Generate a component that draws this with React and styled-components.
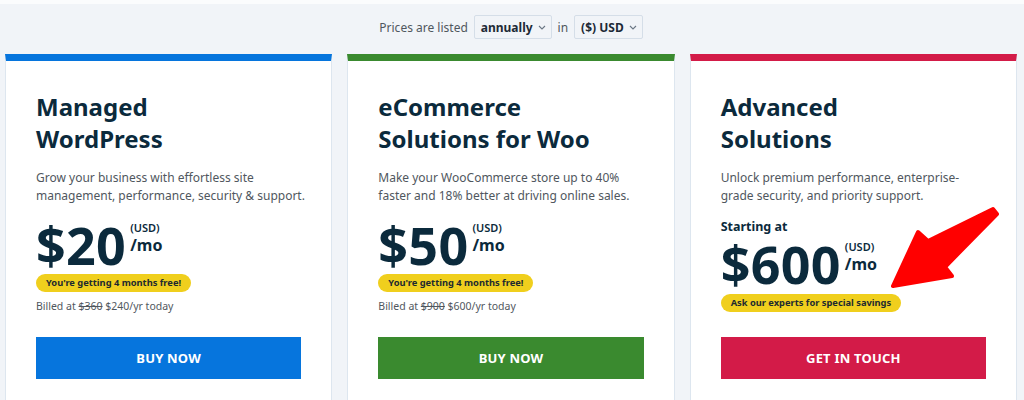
import React from 'react';
import styled, { createGlobalStyle } from 'styled-components';

const GlobalStyle = createGlobalStyle`
  body {
    margin: 0;
    background: #f1f4f8;
    font-family: "Noto Sans", "Open Sans", "Liberation Sans", sans-serif;
  }
`;

const Page = styled.div`
  position: relative;
  border-top: 4px solid #fbfcfd;
  padding: 0 7px 0 5px;
  overflow: hidden;
  height: 396px;
`;

const Toolbar = styled.div`
  display: flex;
  align-items: center;
  justify-content: center;
  gap: 6px;
  height: 46px;
  padding-bottom: 4px;
  font-size: 12px;
  color: #50575e;
`;

const Select = styled.div`
  display: flex;
  align-items: center;
  gap: 5px;
  height: 24px;
  box-sizing: border-box;
  padding: 0 5px 0 6px;
  border: 1px solid #d5dee8;
  border-radius: 2px;
  font-weight: 700;
  color: #1d2a36;
`;

const Grid = styled.div`
  display: grid;
  grid-template-columns: repeat(3, 1fr);
  gap: 15px;
  align-items: stretch;
`;

const Card = styled.div`
  display: flex;
  flex-direction: column;
  background: #fff;
  border: 1px solid #dde6ef;
  border-top: 7px solid ${p => p.$accent};
  padding: 30px 30px 30px 30px;
`;

const Body = styled.div`
  flex: 1;
  display: flex;
  flex-direction: column;
  padding-bottom: 22px;
`;

const Title = styled.h2`
  margin: 0;
  max-width: 220px;
  font-size: 24px;
  line-height: 32px;
  font-weight: 700;
  color: #0b2a3c;
`;

const Desc = styled.p`
  margin: 14px ${p => -(p.$bleed || 0)}px 0 0;
  font-size: 12px;
  line-height: 18px;
  color: #50575e;
`;

const Starting = styled.div`
  margin-top: 13px;
  font-size: 12.5px;
  line-height: 18px;
  font-weight: 700;
  color: #0b2a3c;
`;

const PriceRow = styled.div`
  display: flex;
  align-items: flex-start;
  margin-top: ${p => (p.$tight ? '2px' : '14px')};
  color: #0b2a3c;
`;

const Amount = styled.span`
  font-size: 52px;
  line-height: 52px;
  font-weight: 700;
  letter-spacing: 0.3px;
`;

const Unit = styled.div`
  display: flex;
  flex-direction: column;
  margin: 2px 0 0 4px;
`;

const Currency = styled.span`
  font-size: 11px;
  font-weight: 600;
  line-height: 14px;
`;

const Per = styled.span`
  font-size: 16px;
  font-weight: 700;
  line-height: 20px;
`;

const Badge = styled.span`
  align-self: flex-start;
  margin-top: ${p => (p.$tight ? '4px' : '3px')};
  padding: 0 10px;
  height: 18px;
  line-height: 18px;
  border-radius: 9px;
  background: #f0cf1d;
  color: #1d2a30;
  font-size: 9.3px;
  font-weight: 700;
`;

const Billed = styled.div`
  margin-top: 5px;
  font-size: 10.5px;
  line-height: 18px;
  color: #50575e;

  s {
    text-decoration: line-through;
  }
`;

const Button = styled.button`
  height: 42px;
  border: 0;
  border-radius: 0;
  background: ${p => p.$bg};
  color: #fff;
  font-family: inherit;
  font-size: 13px;
  font-weight: 700;
  letter-spacing: 0.2px;
  cursor: pointer;
`;

const Arrow = styled.svg`
  position: absolute;
  left: 886px;
  top: 196px;
  pointer-events: none;
`;

function Chevron() {
  return (
    <svg width="8" height="5" viewBox="0 0 8 5">
      <path d="M1 1l3 3 3-3" fill="none" stroke="#6b7785" strokeWidth="1.1" />
    </svg>
  );
}

const plans = [
  {
    title: 'Managed WordPress',
    desc: 'Grow your business with effortless site management, performance, security & support.',
    bleed: 18,
    price: '$20',
    badge: "You're getting 4 months free!",
    was: '$360',
    now: '$240/yr today',
    accent: '#0675dd',
    cta: 'BUY NOW',
  },
  {
    title: 'eCommerce Solutions for Woo',
    desc: 'Make your WooCommerce store up to 40% faster and 18% better at driving online sales.',
    price: '$50',
    badge: "You're getting 4 months free!",
    was: '$900',
    now: '$600/yr today',
    accent: '#3a8a2f',
    cta: 'BUY NOW',
  },
  {
    title: 'Advanced Solutions',
    desc: 'Unlock premium performance, enterprise-grade security, and priority support.',
    price: '$600',
    badge: 'Ask our experts for special savings',
    starting: true,
    accent: '#d31b48',
    cta: 'GET IN TOUCH',
  },
];

export default function App() {
  return (
    <>
      <GlobalStyle />
      <Page>
        <Toolbar>
          <span>Prices are listed</span>
          <Select>annually <Chevron /></Select>
          <span>in</span>
          <Select>($) USD <Chevron /></Select>
        </Toolbar>
        <Grid>
          {plans.map(p => (
            <Card key={p.title} $accent={p.accent}>
              <Body>
                <Title>{p.title}</Title>
                <Desc $bleed={p.bleed}>{p.desc}</Desc>
                {p.starting && <Starting>Starting at</Starting>}
                <PriceRow $tight={p.starting}>
                  <Amount>{p.price}</Amount>
                  <Unit>
                    <Currency>(USD)</Currency>
                    <Per>/mo</Per>
                  </Unit>
                </PriceRow>
                <Badge $tight={p.starting}>{p.badge}</Badge>
                {p.was && (
                  <Billed>
                    Billed at <s>{p.was}</s> {p.now}
                  </Billed>
                )}
              </Body>
              <Button $bg={p.accent}>{p.cta}</Button>
            </Card>
          ))}
        </Grid>
        <Arrow width="116" height="92" viewBox="0 0 116 92">
          <polygon
            points="107,9 42,41 32,32 7,86 66,76 59,67 111,14"
            fill="#ff0000"
            stroke="#ff0000"
            strokeWidth="4"
            strokeLinejoin="round"
          />
        </Arrow>
      </Page>
    </>
  );
}
